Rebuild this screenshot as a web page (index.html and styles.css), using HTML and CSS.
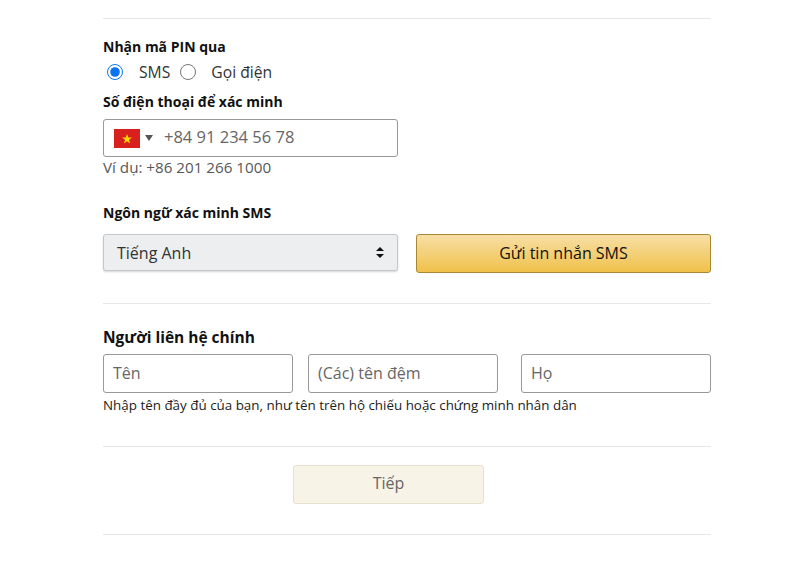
FILE: index.html
```html
<!DOCTYPE html>
<html lang="vi">
<head>
<meta charset="utf-8">
<title>Xác minh</title>
<link rel="stylesheet" href="styles.css">
</head>
<body>
<div class="form">
  <hr class="rule rule-top">

  <div class="field-label">Nhận mã PIN qua</div>
  <div class="radio-row">
    <input class="radio" type="radio" name="pin" id="pin-sms" checked>
    <label class="radio-text" for="pin-sms">SMS</label>
    <input class="radio" type="radio" name="pin" id="pin-call">
    <label class="radio-text" for="pin-call">Gọi điện</label>
  </div>

  <div class="field-label phone-label">Số điện thoại để xác minh</div>
  <div class="phone-box">
    <svg class="flag" viewBox="0 0 26 19" width="26" height="19">
      <rect width="26" height="19" fill="#d8201f"/>
      <polygon points="13,5 14.2,8.6 18,8.6 14.9,10.8 16.1,14.4 13,12.2 9.9,14.4 11.1,10.8 8,8.6 11.8,8.6" fill="#ffde00"/>
    </svg>
    <span class="caret"></span>
    <input class="phone-input" type="text" placeholder="+84 91 234 56 78">
  </div>
  <div class="hint">Ví dụ: +86 201 266 1000</div>

  <div class="field-label lang-label">Ngôn ngữ xác minh SMS</div>
  <div class="lang-row">
    <div class="select">
      <span>Tiếng Anh</span>
      <svg class="updown" viewBox="0 0 8 11" width="8" height="11">
        <path d="M4 0 8 4H0zM0 7h8l-4 4z" fill="#111"/>
      </svg>
    </div>
    <button class="btn-sms" type="button">Gửi tin nhắn SMS</button>
  </div>

  <hr class="rule rule-mid">

  <div class="section-title">Người liên hệ chính</div>
  <div class="name-row">
    <input class="text-input" type="text" placeholder="Tên">
    <input class="text-input" type="text" placeholder="(Các) tên đệm">
    <input class="text-input name-last" type="text" placeholder="Họ">
  </div>
  <div class="name-hint">Nhập tên đầy đủ của bạn, như tên trên hộ chiếu hoặc chứng minh nhân dân</div>

  <hr class="rule rule-next">
  <div class="next-row">
    <button class="btn-next" type="button">Tiếp</button>
  </div>
  <hr class="rule rule-bottom">
</div>
</body>
</html>
```

FILE: styles.css
```css
* {
  box-sizing: border-box;
}
body {
  margin: 0;
  background: #fff;
  color: #111;
  font-family: "Open Sans", sans-serif;
  font-size: 14px;
  line-height: 20px;
}
.form {
  width: 608px;
  margin-left: 103px;
  padding-top: 18px;
}
.rule {
  border: 0;
  border-top: 1px solid #e7e7e7;
  margin: 0;
}
.field-label {
  font-size: 14px;
  font-weight: 700;
  line-height: 20px;
}
.rule-top + .field-label {
  margin-top: 18px;
}
.radio-row {
  display: flex;
  align-items: center;
  height: 24px;
  margin-top: 3px;
  color: #333;
  font-size: 15.7px;
}
.radio {
  width: 16px;
  height: 16px;
  margin: 0 0 0 4px;
  accent-color: #0a74f0;
}
.radio-text {
  margin-left: 16px;
}
.radio + .radio-text + .radio + .radio-text {
  margin-left: 15px;
}
.radio-text + .radio {
  margin-left: 10px;
}
.phone-label {
  margin-top: 8px;
}
.phone-box {
  display: flex;
  align-items: center;
  width: 295px;
  height: 38px;
  margin-top: 7px;
  padding-left: 10px;
  border: 1px solid #999;
  border-radius: 3px;
}
.flag {
  flex: none;
}
.caret {
  width: 0;
  height: 0;
  margin-left: 5px;
  border-left: 4.5px solid transparent;
  border-right: 4.5px solid transparent;
  border-top: 6px solid #555;
}
.phone-input {
  flex: 1;
  min-width: 0;
  margin-left: 11px;
  padding: 0 0 2px;
  border: 0;
  outline: 0;
  font: inherit;
  font-size: 16.5px;
}
input::placeholder {
  color: #666;
  opacity: 1;
}
.hint {
  color: #565959;
  font-size: 15.2px;
}
.lang-label {
  margin-top: 26px;
}
.lang-row {
  display: flex;
  align-items: flex-start;
  gap: 18px;
  margin-top: 11px;
}
.select {
  display: flex;
  align-items: center;
  justify-content: space-between;
  width: 295px;
  height: 37px;
  padding: 0 13px;
  background: #eceef0;
  border: 1px solid #c5c8cb;
  border-radius: 3px;
  box-shadow: 0 1px 2px rgba(15, 17, 17, 0.18);
  color: #333;
  font-size: 16px;
}
.btn-sms {
  width: 295px;
  height: 39px;
  padding-bottom: 3px;
  background: linear-gradient(#f7dfa5, #f0c14b);
  border: 1px solid #a88734;
  border-radius: 3px;
  color: #111;
  font: inherit;
  font-size: 16px;
}
.rule-mid {
  margin-top: 30px;
}
.section-title {
  margin-top: 22px;
  font-size: 15.5px;
  font-weight: 700;
  line-height: 22px;
}
.name-row {
  display: flex;
  gap: 15px;
  margin-top: 6px;
}
.text-input {
  width: 190px;
  height: 39px;
  padding: 0 9px 2px;
  border: 1px solid #999;
  border-radius: 3px;
  outline: 0;
  font: inherit;
  font-size: 16px;
}
.name-last {
  margin-left: 8px;
}
.name-hint {
  margin-top: 2px;
  font-size: 13.4px;
  color: #222;
}
.rule-next {
  margin-top: 31px;
}
.next-row {
  padding: 18px 0 30px 190px;
}
.btn-next {
  display: block;
  width: 191px;
  height: 39px;
  padding-bottom: 4px;
  background: #f8f3e7;
  border: 1px solid #e8e0ce;
  border-radius: 3px;
  color: #666;
  font: inherit;
  font-size: 16px;
}
```
